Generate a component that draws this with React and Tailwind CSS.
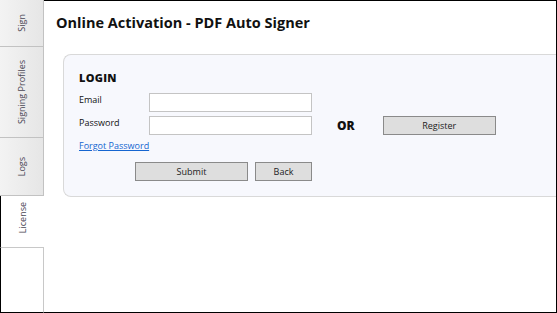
import React from 'react';

const TAB = 'flex items-center justify-center w-full bg-gradient-to-r from-[#f3f3f3] to-[#e6e6e6] border-r border-b border-[#c2c2c2]';
const TAB_TEXT = 'text-[9px] text-[#4a4654] [writing-mode:vertical-rl] rotate-180 whitespace-nowrap';
const BTN = 'h-[19px] flex items-center justify-center bg-[#dedede] border border-[#8a8a8a] text-[9px] leading-[12px] text-[#222]';

export default function App() {
  return (
    <div className="flex w-[557px] h-[313px] bg-white font-['Open_Sans','Noto_Sans',sans-serif] text-[#111]">
      {/* tab strip */}
      <div className="w-[44px] flex flex-col shrink-0">
        <div className={`${TAB} h-[47px]`}>
          <span className={TAB_TEXT}>Sign</span>
        </div>
        <div className={`${TAB} h-[91px]`}>
          <span className={TAB_TEXT}>Signing Profiles</span>
        </div>
        <div className={`${TAB} h-[58px]`}>
          <span className={TAB_TEXT}>Logs</span>
        </div>
        <div className="h-[51px] flex items-center justify-center bg-white border-l border-black pb-[8px]">
          <span className={TAB_TEXT}>License</span>
        </div>
        <div className="flex-1 border-l border-b border-black border-t border-t-[#c8c8c8] border-r border-r-[#c8c8c8]" />
      </div>

      {/* content */}
      <div className="flex-1 flex flex-col border-t border-r border-b border-black">
        <div className="pl-[12px] pt-[12px] h-[53px]">
          <h1 className="text-[14.5px] font-bold leading-[20px] text-[#111]">Online Activation - PDF Auto Signer</h1>
        </div>

        <div className="ml-[19px] h-[143px] bg-[#f7f8fd] border border-r-0 border-[#d9d9d9] rounded-l-[8px] pl-[15px] pt-[16px]">
          <div className="text-[11px] font-black leading-[14px] tracking-[0.3px]">LOGIN</div>

          <div className="mt-[8px] grid grid-cols-[70px_163px_auto_auto] justify-start gap-y-[4px] items-center">
            <span className="text-[9px] leading-[12px] self-start pt-[1px]">Email</span>
            <div className="h-[19px] bg-white border border-[#c4c4c4]" />
            <div />
            <div />

            <span className="text-[9px] leading-[12px] self-start pt-[1px]">Password</span>
            <div className="h-[19px] bg-white border border-[#c4c4c4]" />
            <span className="ml-[25px] text-[12px] font-black leading-[14px]">OR</span>
            <button className={`${BTN} ml-[28px] w-[113px]`}>Register</button>
          </div>

          <div className="mt-[5px] text-[9px] leading-[12px]">
            <a className="text-[#1565d0] underline">Forgot Password</a>
          </div>

          <div className="mt-[10px] flex gap-[7px] pl-[56px]">
            <button className={`${BTN} w-[113px]`}>Submit</button>
            <button className={`${BTN} w-[57px]`}>Back</button>
          </div>
        </div>
      </div>
    </div>
  );
}
